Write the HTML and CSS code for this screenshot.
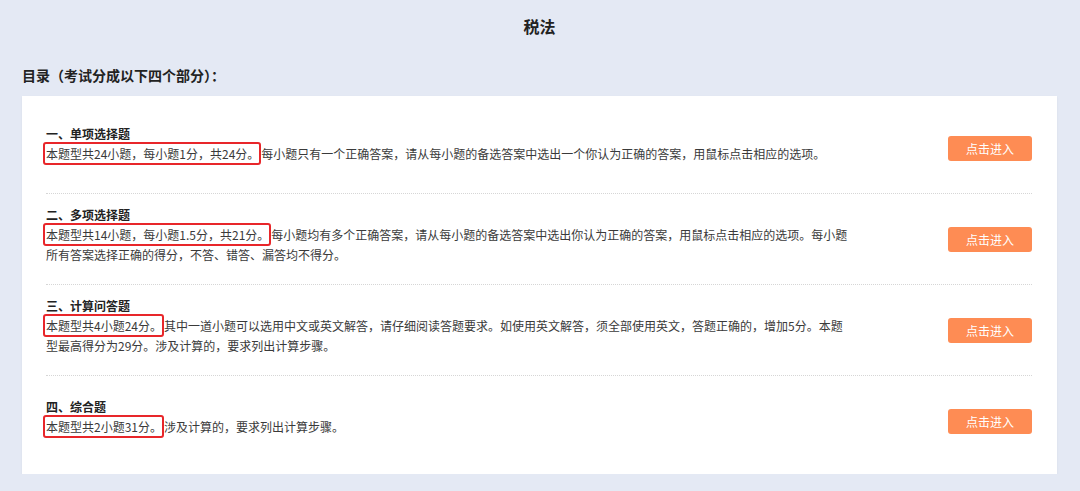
FILE: index.html
```html
<!DOCTYPE html>
<html lang="zh-CN">
<head>
    <meta charset="UTF-8">
    <title>税法</title>
    <link rel="stylesheet" href="styles.css">
</head>
<body>
    <div class="page">
        <h1 class="pageTitle">税法</h1>
        <h2 class="tocTitle">目录（考试分成以下四个部分）：</h2>
        <div class="card">
            <div class="part">
                <div class="partText">
                    <div class="partName">一、单项选择题</div>
                    <p class="partDesc"><span class="mark">本题型共24小题，每小题1分，共24分。</span>每小题只有一个正确答案，请从每小题的备选答案中选出一个你认为正确的答案，用鼠标点击相应的选项。</p>
                </div>
                <a class="enterBtn">点击进入</a>
            </div>
            <div class="part">
                <div class="partText">
                    <div class="partName">二、多项选择题</div>
                    <p class="partDesc"><span class="mark">本题型共14小题，每小题1.5分，共21分。</span>每小题均有多个正确答案，请从每小题的备选答案中选出你认为正确的答案，用鼠标点击相应的选项。每小题所有答案选择正确的得分，不答、错答、漏答均不得分。</p>
                </div>
                <a class="enterBtn">点击进入</a>
            </div>
            <div class="part">
                <div class="partText">
                    <div class="partName">三、计算问答题</div>
                    <p class="partDesc"><span class="mark">本题型共4小题24分。</span>其中一道小题可以选用中文或英文解答，请仔细阅读答题要求。如使用英文解答，须全部使用英文，答题正确的，增加5分。本题型最高得分为29分。涉及计算的，要求列出计算步骤。</p>
                </div>
                <a class="enterBtn">点击进入</a>
            </div>
            <div class="part">
                <div class="partText">
                    <div class="partName">四、综合题</div>
                    <p class="partDesc"><span class="mark">本题型共2小题31分。</span>涉及计算的，要求列出计算步骤。</p>
                </div>
                <a class="enterBtn">点击进入</a>
            </div>
        </div>
    </div>
</body>
</html>
```

FILE: styles.css
```css
body {
    margin: 0;
    background-color: #e4e9f4;
    font-family: "Noto Sans CJK SC", "Noto Sans", sans-serif;
    color: #333;
}

.page {
    padding: 16px 23px 0 22px;
}

.pageTitle {
    margin: 0;
    text-align: center;
    font-size: 16px;
    line-height: 20px;
    font-weight: bold;
    color: #222;
}

.tocTitle {
    margin: 29px 0 11px;
    font-size: 14px;
    line-height: 20px;
    font-weight: bold;
    color: #222;
}

.card {
    background-color: #fff;
    padding: 7px 25px 7px 24px;
    box-shadow: 0 1px 2px rgba(0, 0, 0, 0.06);
}

.part {
    display: flex;
    align-items: center;
    justify-content: space-between;
    height: 91px;
    box-sizing: border-box;
    border-bottom: 1px dotted #d6d6d6;
}

.part:last-child {
    border-bottom: none;
}

.partText {
    width: 802px;
    padding-bottom: 9px;
}

.partName {
    font-size: 12px;
    line-height: 20px;
    font-weight: bold;
    color: #222;
}

.partDesc {
    margin: 0;
    font-size: 12px;
    line-height: 20px;
    color: #3a3a3a;
}

.mark {
    border: 2px solid #e8262a;
    border-radius: 3px;
    padding: 1px 0 1px 1px;
    margin-left: -3px;
}

.enterBtn {
    display: block;
    width: 84px;
    height: 25px;
    line-height: 25px;
    text-align: center;
    font-size: 12px;
    color: #fff;
    background-color: #fe8c54;
    border-radius: 3px;
    cursor: pointer;
}
```
